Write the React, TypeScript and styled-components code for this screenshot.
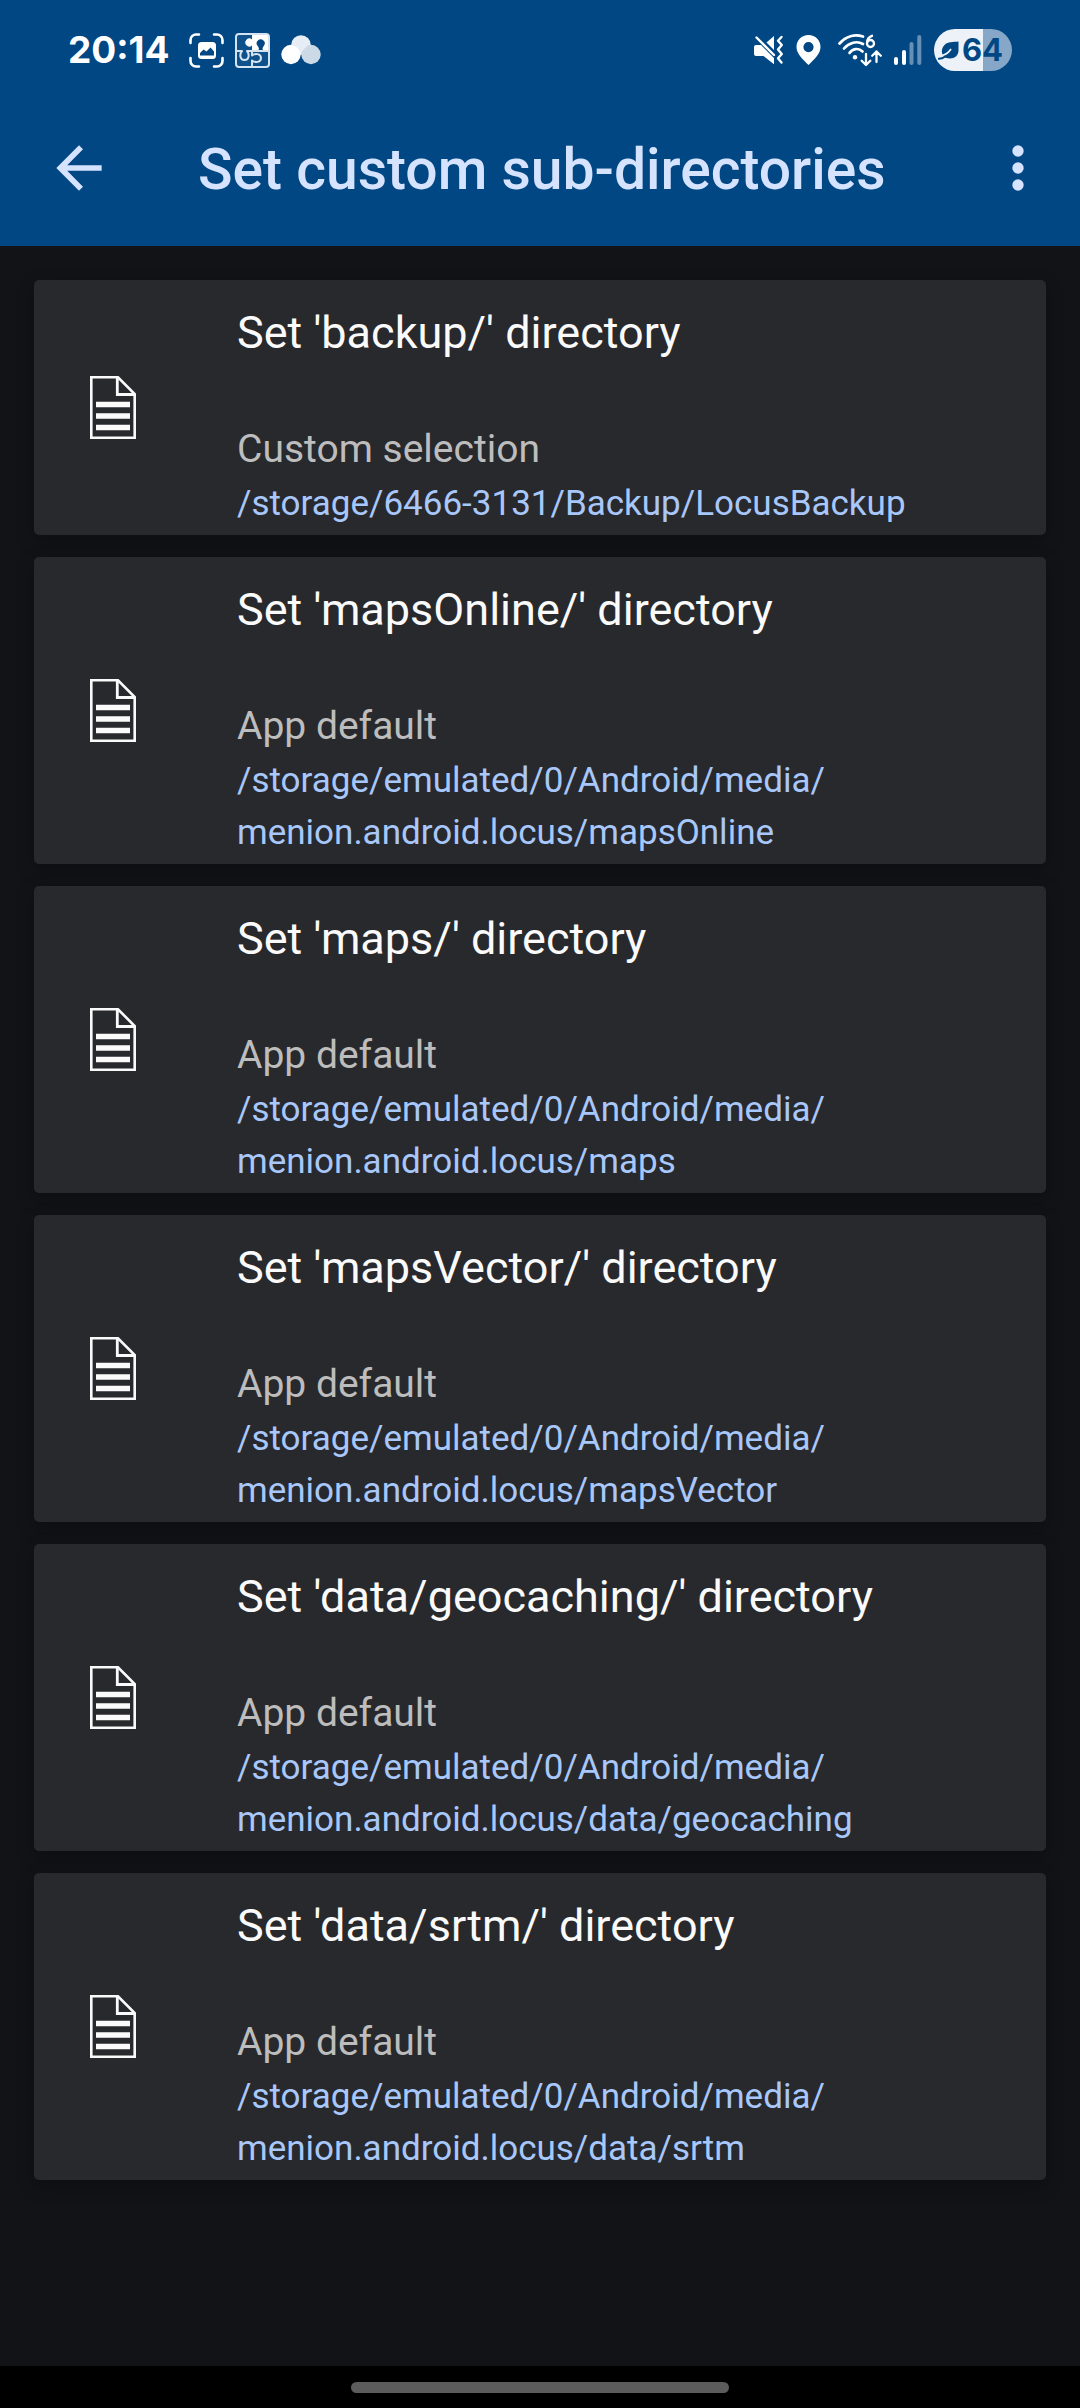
import React from "react";
import styled, { createGlobalStyle } from "styled-components";

const color = {
  header: "#004783",
  onHeader: "#d6e3ff",
  page: "#121317",
  card: "#28292d",
  title: "#fafafa",
  muted: "#bdbdbd",
  path: "#a8c7fa",
};

const GlobalStyle = createGlobalStyle`
  *, *::before, *::after { box-sizing: border-box; }
  body {
    margin: 0;
    background: ${color.page};
    font-family: Roboto, "Noto Sans", sans-serif;
  }
`;

const Screen = styled.div`
  display: flex;
  flex-direction: column;
  min-height: 100vh;
  background: ${color.page};
`;

const Header = styled.header`
  background: ${color.header};
`;

const StatusBar = styled.div`
  display: flex;
  align-items: center;
  justify-content: space-between;
  height: 89px;
  padding: 11px 68px 0;
  color: #fff;
`;

const StatusGroup = styled.div<{ $gap: number }>`
  display: flex;
  align-items: center;
  gap: ${(p) => p.$gap}px;

  svg {
    display: block;
    flex: none;
  }
`;

const Clock = styled.time`
  margin-right: 8px;
  font-family: Inter, sans-serif;
  font-size: 37px;
  font-weight: 700;
  line-height: 44px;
`;

const Battery = styled.div`
  display: flex;
  align-items: center;
  justify-content: center;
  gap: 3px;
  width: 78px;
  height: 42px;
  padding-right: 5px;
  border-radius: 21px;
  background: linear-gradient(to right, #edf2f8 63%, #86a7c7 63%);
  color: ${color.header};
  font-family: Inter, sans-serif;
  font-size: 31px;
  font-weight: 700;
  line-height: 42px;
`;

const AppBar = styled.div`
  display: flex;
  align-items: center;
  height: 157px;
  padding: 0 28px 0 45px;
  color: ${color.onHeader};
`;

const IconButton = styled.button`
  display: flex;
  flex: none;
  padding: 0;
  border: 0;
  background: none;
  color: inherit;
  cursor: pointer;
`;

const PageTitle = styled.h1`
  flex: 1;
  margin: 0;
  padding: 4px 0 0 85px;
  font-size: 57px;
  font-weight: 500;
  line-height: 64px;
  white-space: nowrap;
`;

const List = styled.ul`
  display: flex;
  flex: 1;
  flex-direction: column;
  gap: 22px;
  margin: 0;
  padding: 34px;
  list-style: none;
`;

const Card = styled.button`
  display: flex;
  align-items: center;
  width: 100%;
  padding: 27px 24px 5px 56px;
  border: 0;
  border-radius: 5px;
  background: ${color.card};
  box-shadow: 0 6px 18px rgba(0, 0, 0, 0.28);
  font-family: inherit;
  text-align: left;
  cursor: pointer;
`;

const CardIcon = styled.svg`
  display: block;
  flex: none;
  margin: 0 101px 22px 0;
`;

const CardBody = styled.span`
  display: flex;
  flex: 1;
  flex-direction: column;
  min-width: 0;
`;

const CardTitle = styled.span`
  margin-bottom: 61px;
  color: ${color.title};
  font-size: 45px;
  line-height: 52px;
`;

const CardSource = styled.span`
  color: ${color.muted};
  font-size: 39px;
  line-height: 58px;
`;

const CardPath = styled.span`
  color: ${color.path};
  font-size: 35px;
  line-height: 52px;
`;

const NavigationBar = styled.footer`
  display: flex;
  align-items: center;
  justify-content: center;
  height: 42px;
  background: #000;
`;

const HomeHandle = styled.div`
  width: 35%;
  height: 11px;
  border-radius: 6px;
  background: #5c5c5c;
`;

const CaptureIcon = () => (
  <svg width="35" height="35" viewBox="0 0 35 35" fill="none" aria-hidden="true">
    <path
      d="M1.5 10V7a5.5 5.5 0 0 1 5.5-5.500h3M25 1.500h3A5.500 5.500 0 0 1 33.500 7v3M33.500 25v3a5.500 5.500 0 0 1-5.500 5.500h-3M10 33.500H7A5.500 5.500 0 0 1 1.500 28v-3"
      stroke="#fff"
      strokeWidth="2.600"
      strokeLinecap="round"
    />
    <rect x="9" y="9" width="18" height="17" rx="3.500" fill="#fff" />
    <path d="M11 22.500v-2.500l3.500-3.500 3 2 4-4 3.500 4v4z" fill={color.header} />
  </svg>
);

const PuzzleIcon = () => (
  <svg width="35" height="35" viewBox="0 0 35 35" fill="none" aria-hidden="true">
    <rect x="1" y="1" width="33" height="33" rx="3" fill="#0f528b" stroke="#d5e3f0" strokeWidth="2" />
    <path d="M17 2h15a1 1 0 0 1 1 1v15H17v-5.500a4 4 0 1 1 0-6z" fill="#fff" />
    <path
      d="M23 18c1.500-2 1-3.500-.3-5a4 4 0 1 1 6 0c-1.200 1.500-1.700 3-.2 5z"
      fill={color.header}
    />
    <path
      d="M2 18h5c-2.500 3-2.500 9 2.500 9s5-6 2.500-9h5v4.500c3-2.500 9-2 9 2.500s-6 5-9 2.500V33M17 18h16"
      stroke="#d5e3f0"
      strokeWidth="2"
      strokeLinejoin="round"
    />
  </svg>
);

const CirclesIcon = () => (
  <svg width="40" height="30" viewBox="0 0 40 30" aria-hidden="true">
    <circle cx="20" cy="10" r="9.800" fill="#e6edf5" />
    <circle cx="30" cy="19.500" r="9.700" fill="#ccd9e7" />
    <circle cx="10" cy="19.500" r="9.700" fill="#fff" />
    <path d="M10.500 10q6 .5 9 8l7-7.500L20 6z" fill="#e6edf5" />
  </svg>
);

const MuteVibrateIcon = () => (
  <svg width="31" height="30" viewBox="0 0 31 30" aria-hidden="true">
    <path d="M1 12q0-2 2-2h5l13 13v6.200L10.500 21H3q-2 0-2-2z" fill="#fff" />
    <path d="M13.500 7.500 21 1v14z" fill="#fff" />
    <path d="M3.500 2.500 21 20" stroke="#fff" strokeWidth="2.400" strokeLinecap="round" />
    <path
      d="M28.500 2l-3.500 3.800 3.800 4.200-3.800 4.500 3.800 4.500-3.800 4.200 3.500 4.300"
      fill="none"
      stroke="#fff"
      strokeWidth="2.400"
      strokeLinecap="round"
      strokeLinejoin="round"
    />
  </svg>
);

const PinIcon = () => (
  <svg width="25" height="30" viewBox="0 0 25 30" aria-hidden="true">
    <path
      fillRule="evenodd"
      d="M12.500 0C5.500 0 .5 5.300.5 12c0 7 6.500 12.500 12 18 5.500-5.500 12-11 12-18 0-6.700-5-12-12-12zm0 7a5 5 0 1 1 0 10.200 5 5 0 0 1 0-10.200z"
      fill="#fff"
    />
  </svg>
);

const WifiIcon = () => (
  <svg width="49" height="33" viewBox="-5 0 49 33" fill="none" stroke="#fff" strokeLinecap="round" aria-hidden="true">
    <path d="M1.500 9.500C8 2 17 0 25 2.500" strokeWidth="2.700" />
    <path d="M6 14.500C11 8.500 19 6.500 25 10" strokeWidth="2.700" />
    <path d="M11.500 19c3-4.500 9-5.500 13-1.500" strokeWidth="2.700" />
    <circle cx="17" cy="23.300" r="2.200" fill="#fff" stroke="none" />
    <path d="M34 1.800c-3.500 1.200-5 4-5 7" strokeWidth="2.300" />
    <circle cx="32.500" cy="9.500" r="3.500" strokeWidth="2.300" />
    <path
      d="M28 20v10.500M23.700 26.800l4.300 4.200 4.300-4.200M38.500 28V17.500M34.200 21.700l4.300-4.200 4.300 4.200"
      strokeWidth="2.300"
      strokeLinejoin="round"
    />
  </svg>
);

const SignalIcon = () => (
  <svg width="28" height="30" viewBox="0 0 28 30" fill="#fff" aria-hidden="true">
    <rect x="0" y="22" width="4" height="8" rx="2" />
    <rect x="8" y="15" width="4" height="15" rx="2" />
    <rect x="15.500" y="7" width="4" height="23" rx="2" opacity=".4" />
    <rect x="23.300" y="0" width="4" height="30" rx="2" opacity=".4" />
  </svg>
);

const LeafIcon = () => (
  <svg width="21" height="19" viewBox="0 0 21 19" fill="none" aria-hidden="true">
    <path d="M20.500.5v9c0 5-4 8-8.500 8-3 0-5-.8-6.500-2.500C3 12 3.500 7 6.500 4 10 .5 15 1 20.500.5z" fill={color.header} />
    <path d="M4 14.500c4-1 7-3.500 9-6.500" stroke="#edf2f8" strokeWidth="1.800" />
    <path d="M.8 17.800c2.500 0 4.500-.8 6.500-2.300" stroke={color.header} strokeWidth="2" strokeLinecap="round" />
  </svg>
);

const BackIcon = () => (
  <svg width="68" height="68" viewBox="0 0 24 24" fill="currentColor" aria-hidden="true">
    <path d="M20 11H7.830l5.590-5.590L12 4l-8 8 8 8 1.410-1.410L7.830 13H20v-2z" />
  </svg>
);

const MoreIcon = () => (
  <svg width="68" height="68" viewBox="0 0 24 24" fill="currentColor" aria-hidden="true">
    <circle cx="12" cy="6" r="2" />
    <circle cx="12" cy="12" r="2" />
    <circle cx="12" cy="18" r="2" />
  </svg>
);

const DocumentIcon = () => (
  <CardIcon width="46" height="63" viewBox="0 0 46 63" fill="none" aria-hidden="true">
    <path d="M1.300 1.300h26.700L44.700 18v43.700H1.300z" stroke="#fafafa" strokeWidth="2.600" />
    <path d="M27.300 1.500v17h17" stroke="#fafafa" strokeWidth="2.800" />
    <path d="M6 28.500h34M6 40h34M6 51.500h34" stroke="#fafafa" strokeWidth="5.600" />
  </CardIcon>
);

type Directory = { name: string; source: string; root: string; path: string };

const directories: Directory[] = [
  {
    name: "backup/",
    source: "Custom selection",
    root: "/storage/6466-3131/",
    path: "Backup/LocusBackup",
  },
  ...["mapsOnline", "maps", "mapsVector", "data/geocaching", "data/srtm"].map((dir) => ({
    name: `${dir}/`,
    source: "App default",
    root: "/storage/emulated/0/Android/media/",
    path: `menion.android.locus/${dir}`,
  })),
];

export default function App() {
  return (
    <Screen>
      <GlobalStyle />
      <Header>
        <StatusBar>
          <StatusGroup $gap={11}>
            <Clock>20:14</Clock>
            <CaptureIcon />
            <PuzzleIcon />
            <CirclesIcon />
          </StatusGroup>
          <StatusGroup $gap={12}>
            <MuteVibrateIcon />
            <PinIcon />
            <WifiIcon />
            <SignalIcon />
            <Battery>
              <LeafIcon />
              64
            </Battery>
          </StatusGroup>
        </StatusBar>
        <AppBar>
          <IconButton type="button" aria-label="Back">
            <BackIcon />
          </IconButton>
          <PageTitle>Set custom sub-directories</PageTitle>
          <IconButton type="button" aria-label="More options">
            <MoreIcon />
          </IconButton>
        </AppBar>
      </Header>
      <List>
        {directories.map((dir) => (
          <li key={dir.name}>
            <Card type="button">
              <DocumentIcon />
              <CardBody>
                <CardTitle>Set '{dir.name}' directory</CardTitle>
                <CardSource>{dir.source}</CardSource>
                <CardPath>
                  {dir.root}
                  <wbr />
                  {dir.path}
                </CardPath>
              </CardBody>
            </Card>
          </li>
        ))}
      </List>
      <NavigationBar>
        <HomeHandle />
      </NavigationBar>
    </Screen>
  );
}
